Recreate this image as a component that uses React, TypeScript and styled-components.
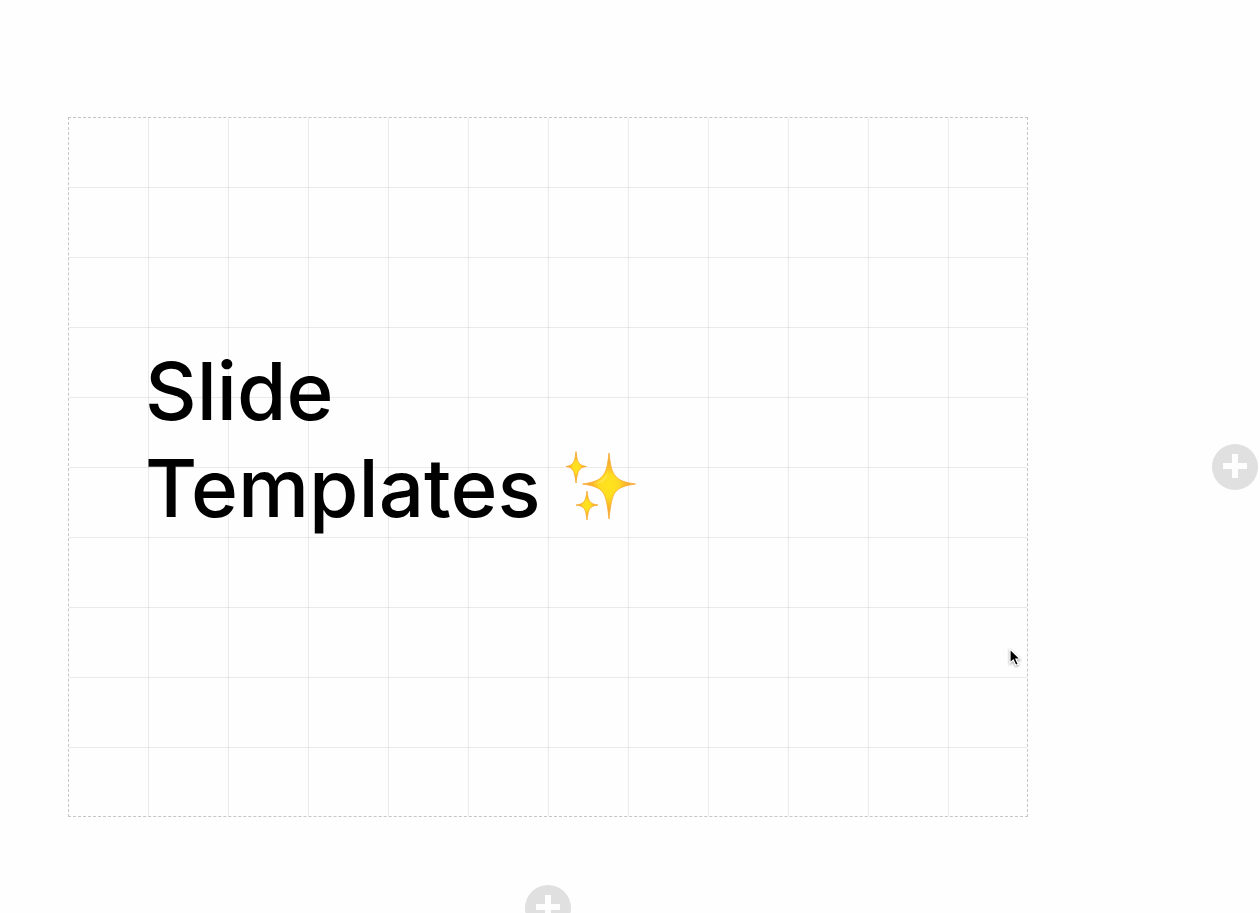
import React from "react";
import styled, { createGlobalStyle } from "styled-components";

const GlobalStyle = createGlobalStyle`
  body {
    margin: 0;
    background: #fefefe;
    color: #000;
    font-family: Inter, "Liberation Sans", sans-serif;
  }
`;

const Workspace = styled.main`
  position: relative;
  box-sizing: border-box;
  height: 100vh;
  overflow: hidden;
  padding: 117px 2px 0 68px;
  display: grid;
  grid-template-columns: minmax(0, 1fr) 46px;
  grid-template-rows: auto 46px;
  column-gap: 184px;
  row-gap: 68px;
  place-items: center;
  align-content: start;
`;

const Slide = styled.section`
  position: relative;
  box-sizing: border-box;
  width: 100%;
  aspect-ratio: 48 / 35;
  display: flex;
  flex-direction: column;
  justify-content: center;
  padding: 0 76px 56px;
  border: 1px dashed #c6c6c6;
  background-image: linear-gradient(to right, rgba(0, 0, 0, 0.08) 1px, transparent 1px),
    linear-gradient(to bottom, rgba(0, 0, 0, 0.08) 1px, transparent 1px);
  background-size: calc(100% / 12) 100%, 100% 10%;
  background-origin: border-box;
  background-clip: padding-box;
`;

const Title = styled.h1`
  margin: 0;
  font-size: 80px;
  line-height: 97px;
  font-weight: 500;
`;

const TitleLine = styled.span`
  display: flex;
  align-items: center;
  gap: 24px;
`;

const SparkleIcon = styled.svg`
  width: 72px;
  height: 72px;
  margin-bottom: 4px;
  flex: none;
`;

const AddButton = styled.button`
  width: 46px;
  height: 46px;
  padding: 10px 11px 12px;
  border: 0;
  border-radius: 50%;
  background: #e0e0e0;
  cursor: pointer;

  svg {
    display: block;
    width: 24px;
    height: 24px;
  }
`;

const Pointer = styled.svg`
  position: absolute;
  right: 5px;
  top: 529px;
  width: 16px;
  height: 22px;
  pointer-events: none;
`;

function Sparkles() {
  return (
    <SparkleIcon viewBox="0 0 72 72" role="img" aria-label="Sparkles">
      <defs>
        <radialGradient id="gold">
          <stop offset="0" stopColor="#ffe41c" />
          <stop offset="0.35" stopColor="#ffdc22" />
          <stop offset="0.6" stopColor="#fbb928" />
          <stop offset="1" stopColor="#f2964a" />
        </radialGradient>
      </defs>
      <g fill="url(#gold)" stroke="#f6a92c" strokeWidth="0.8" strokeLinejoin="round">
        <path d="M44 3C45.500 17 47 22 50.500 26C54 30.500 60 32.500 70.500 34C60 35.500 54 37.500 50.500 42C47 46 45.500 55 44 69C42.500 55 41 46 37.500 42C34 37.500 28 35.500 17.500 34C28 32.500 34 30.500 37.500 26C41 22 42.500 17 44 3Z" />
        <path d="M11 1.500C12 9 12.500 11 14 13C15.500 15 17.500 16 21.500 16.500C17.500 17 15.500 18 14 20.500C12.500 23 12 26 11 33C10 26 9.500 23 8 20.500C6.500 18 4.500 17 1 16.500C4.500 16 6.500 15 8 13C9.500 11 10 9 11 1.500Z" />
        <path d="M22 41C23 48 23.500 49.500 25 51.500C26.500 53.500 28.500 54.500 33 55C28.500 55.500 26.500 56.500 25 58.500C23.500 60.500 23 63 22 70C21 63 20.500 60.500 19 58.500C17.500 56.500 15.500 55.500 11 55C15.500 54.500 17.500 53.500 19 51.500C20.500 49.500 21 48 22 41Z" />
      </g>
      <path d="M43 20C42 27 38 31 28 34C36 34 43 31 43 20Z" fill="#fff27a" opacity="0.5" />
    </SparkleIcon>
  );
}

function AddSlide({ label }: { label: string }) {
  return (
    <AddButton type="button" aria-label={label}>
      <svg viewBox="0 0 24 24" aria-hidden="true">
        <path d="M9 0h6v9h9v6h-9v9h-6v-9H0V9h9z" fill="#fefefe" />
      </svg>
    </AddButton>
  );
}

export default function App() {
  return (
    <>
      <GlobalStyle />
      <Workspace>
        <Slide>
          <Title>
            <TitleLine>Slide</TitleLine>
            <TitleLine>
              Templates
              <Sparkles />
            </TitleLine>
          </Title>
          <Pointer viewBox="0 0 16 22" aria-hidden="true">
            <path
              d="M4 2v14l3.300-3 2.400 5.300 2.600-1.100-2.400-5.200h4.300z"
              fill="#000"
              stroke="#fff"
              strokeWidth="1.200"
              filter="drop-shadow(0 1px 1px rgba(0,0,0,.4))"
            />
          </Pointer>
        </Slide>
        <AddSlide label="Add slide to the right" />
        <AddSlide label="Add slide below" />
      </Workspace>
    </>
  );
}
